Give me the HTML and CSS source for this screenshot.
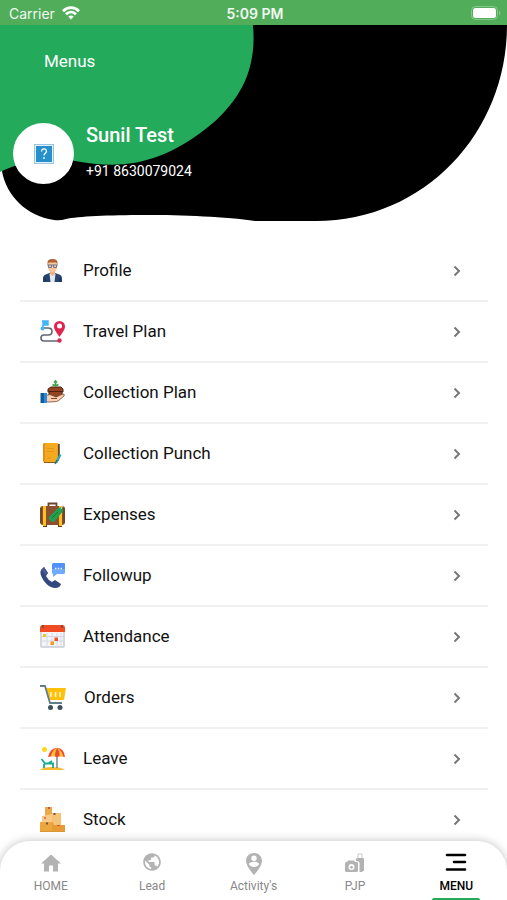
FILE: index.html
```
<!DOCTYPE html>
<html lang="en">
<head>
  <meta charset="UTF-8">
  <title>Menus</title>
  <meta name="viewport" content="width=device-width, initial-scale=1.0">
  <link rel="stylesheet" href="styles.css">
</head>
<body>
  <div class="status-bar">
    <div class="status-left">
      <span>Carrier</span>
      <svg width="18" height="14" viewBox="0 0 18 14" fill="none" stroke="#fff" stroke-width="2.8">
        <path d="M1 5.2C5.5 .5 12.5 .5 17 5.2"/>
        <path d="M4 8.3C7 5.3 11 5.3 14 8.3"/>
        <path d="M6.3 10.6C8 9 10 9 11.7 10.6L9 13.4Z" fill="#fff" stroke="none"/>
      </svg>
    </div>
    <div class="status-time">5:09 PM</div>
    <div class="status-right">
      <svg width="30" height="14" viewBox="0 0 30 14">
        <rect x=".5" y=".5" width="26" height="13" rx="4" fill="none" stroke="#86c78c"/>
        <rect x="2" y="2" width="23" height="10" rx="2.5" fill="#fff"/>
        <path d="M28 4.5Q31 7 28 9.5Z" fill="#86c78c"/>
      </svg>
    </div>
  </div>

  <header class="header">
    <svg class="header-bg" viewBox="0 0 507 196" preserveAspectRatio="none">
      <path d="M0 0H507C507 108 424 196 316 196H255C200 188 90 189 66 194Q60 196 54 195C26 191 6 170 2 146Z" fill="#000"/>
      <path d="M0 0H253C257 45 240 74 213 98C160 142 120 144 75 136C45 131 15 139 0 147Z" fill="#24aa5b"/>
    </svg>
    <h1 class="header-title">Menus</h1>
    <div class="user">
      <div class="avatar">
        <svg width="20" height="20" viewBox="0 0 20 20">
          <rect x=".5" y=".5" width="19" height="19" fill="#e6f2fb" stroke="#9cc3e6"/>
          <rect x="2" y="2" width="16" height="16" fill="#2690cd"/>
          <path d="M7.5 7.5C7.5 4 12.5 4 12.5 7.2C12.5 9.3 10 9.3 10 11.5" fill="none" stroke="#fff" stroke-width="1.3"/>
          <circle cx="10" cy="14" r=".9" fill="#fff"/>
        </svg>
      </div>
      <div class="user-info">
        <p class="user-name">Sunil Test</p>
        <p class="user-phone">+91 8630079024</p>
      </div>
    </div>
  </header>

  <main class="menu-list">
    <a class="menu-item" href="#profile">
      <svg class="menu-icon" viewBox="0 0 25 25">
        <path d="M3 24V20Q3 17 7 16L12 14L18 16Q22 17 22 20V24Z" fill="#27446f"/>
        <path d="M9.5 16L12.5 14L15.5 16L14.5 24H10.5Z" fill="#e4eaf3"/>
        <path d="M10 11H15V16L12.5 18L10 16Z" fill="#eeb184"/>
        <path d="M8 4H17V9Q17 14 12.5 14Q8 14 8 9Z" fill="#fac69b"/>
        <path d="M7.5 6V4Q8 1 12.5 1Q17 1 17.5 4V6L16 4.5H9Z" fill="#ad6238"/>
        <path d="M7 7H18M8.5 7V9.5H11.5V7M13.5 7V9.5H16.5V7" fill="none" stroke="#6b7590"/>
        <path d="M5 20V24M20 20V24" stroke="#162c50"/>
      </svg>
      <span class="menu-label">Profile</span>
      <svg class="chevron" viewBox="0 0 8 12"><path d="M1.5 1.5L6 6L1.5 10.5"/></svg>
    </a>
    <a class="menu-item" href="#travel">
      <svg class="menu-icon" viewBox="0 0 25 25">
        <path d="M3 9H8Q12 9 12 12.500T8 16H4Q1 16 1 19T4 22H19" fill="none" stroke="#626873" stroke-width="1.6"/>
        <path d="M2 2H8V6H3V9" fill="#43b5f5" stroke="#43b5f5" stroke-width="1.5"/>
        <circle cx="2.5" cy="9.5" r="2" fill="#43b5f5"/>
        <path d="M19.5 18C17 14 14 11 14 7.5A5.5 5.5 0 0 1 25 7.5C25 11 22 14 19.5 18Z" fill="#e02450"/>
        <circle cx="19.5" cy="7" r="2.5" fill="#fff"/>
        <circle cx="19.5" cy="21.5" r="2.2" fill="#e02450"/>
      </svg>
      <span class="menu-label">Travel Plan</span>
      <svg class="chevron" viewBox="0 0 8 12"><path d="M1.5 1.5L6 6L1.5 10.5"/></svg>
    </a>
    <a class="menu-item" href="#collection-plan">
      <svg class="menu-icon" viewBox="0 0 25 25">
        <path d="M8 9L11 7H21L23 9V12H22V17H9V12H8Z" fill="#96441f" stroke="#4d2414"/>
        <path d="M9 11.5H22" stroke="#4d2414"/>
        <path d="M15.5 7V2M12.5 4.5L15.5 6L18.5 4.5M14 2.5L15.5 1L17 2.5" fill="none" stroke="#45a247" stroke-width="1.7"/>
        <path d="M6 15.5L10 14.5L16 17L23 14Q25 14 24 16L18 21Q16 22 6 22Z" fill="#ffcfb0" stroke="#6e4936" stroke-width=".8"/>
        <path d="M11 18.5H17" stroke="#6e4936"/>
        <path d="M.5 13H4V23H.5Z" fill="#125c9c"/>
        <path d="M4 13H7V23H4Z" fill="#2a8bdc"/>
      </svg>
      <span class="menu-label">Collection Plan</span>
      <svg class="chevron" viewBox="0 0 8 12"><path d="M1.5 1.5L6 6L1.5 10.5"/></svg>
    </a>
    <a class="menu-item" href="#collection-punch">
      <svg class="menu-icon" viewBox="0 0 25 25">
        <path d="M5 2H17Q19 2 19 4V19L16 22H5Q3 22 3 19V4Q3 2 5 2Z" fill="#f5a91f"/>
        <path d="M3 18V4Q3 2 5 2V21Q3 21 3 18Z" fill="#e98c18"/>
        <path d="M4 21.5H16L18.5 19V3.5" fill="none" stroke="#9a5815" stroke-width="1.2"/>
        <path d="M7 7.5H14M7 10.5H14M7 17H11" stroke="#dc981f"/>
        <path d="M19 3V17" stroke="#4f4536" stroke-width="1.5"/>
        <path d="M20.5 13.5L16 22" stroke="#22a8b8" stroke-width="2.2"/>
        <path d="M17 19L15 23" stroke="#2e6d75" stroke-width="1.2"/>
      </svg>
      <span class="menu-label">Collection Punch</span>
      <svg class="chevron" viewBox="0 0 8 12"><path d="M1.5 1.5L6 6L1.5 10.5"/></svg>
    </a>
    <a class="menu-item" href="#expenses">
      <svg class="menu-icon" viewBox="0 0 25 25">
        <path d="M8.5 5V1.5H16.5V5" fill="none" stroke="#6c432f" stroke-width="1.8"/>
        <path d="M3 22H7V25H3ZM18 22H22V25H18Z" fill="#5d3a2b"/>
        <rect x="0" y="4" width="25" height="19" rx="3" fill="#8a5030"/>
        <path d="M1 6V21M24 6V21" stroke="#74452d" stroke-width="2"/>
        <path d="M3 4H6V24H3ZM19 4H22V24H19Z" fill="#fcc21b"/>
        <path d="M10 14L18 6L22 5L23 9L15 19Q13 21 11 19L9 17Q8 16 10 14Z" fill="#219f50"/>
        <path d="M12 16L18 10" stroke="#137c3b"/>
        <path d="M21 7L23 3" stroke="#dfe5c8"/>
      </svg>
      <span class="menu-label">Expenses</span>
      <svg class="chevron" viewBox="0 0 8 12"><path d="M1.5 1.5L6 6L1.5 10.5"/></svg>
    </a>
    <a class="menu-item" href="#followup">
      <svg class="menu-icon" viewBox="0 0 25 25">
        <path d="M1 7L4 4L8 10L6 13Q8 17 12 19L15 17L21 21Q20 25 15 25Q9 25 4 18Q-1 11 1 7Z" fill="#34477e"/>
        <path d="M1 7L4 4L8 10L6 12Z" fill="#485a94"/>
        <path d="M13 0H24Q25 0 25 2V9Q25 11 24 11H17L13 14V11L12 10V2Z" fill="#6faaff"/>
        <path d="M13 0H24Q25 0 25 2V6H12V2Z" fill="#5292f8"/>
        <path d="M15 5.5H22" stroke="#eef6ff" stroke-width="1.4" stroke-dasharray="1.4 1.4"/>
      </svg>
      <span class="menu-label">Followup</span>
      <svg class="chevron" viewBox="0 0 8 12"><path d="M1.5 1.5L6 6L1.5 10.5"/></svg>
    </a>
    <a class="menu-item" href="#attendance">
      <svg class="menu-icon" viewBox="0 0 25 25">
        <rect x="0" y="2" width="25" height="22" rx="2" fill="#d4d7e0"/>
        <path d="M2 8H23V22H2Z" fill="#f4f5f9"/>
        <path d="M0 8V4Q0 1 3 1H22Q25 1 25 4V8Z" fill="#f14b23"/>
        <path d="M3 1V4M22 1V4" stroke="#8d4936" stroke-width="2"/>
        <path d="M2 12.5H23M2 17H23M7 9V22M12 9V22M17 9V22M21 9V22" stroke="#d6d9e3"/>
        <path d="M3 10H6V13H3Z" fill="#e5ca22"/>
        <path d="M14.5 13.5H18V17H14.5Z" fill="#ee5426"/>
        <path d="M10.5 17.5H14V21H10.5Z" fill="#f39b21"/>
      </svg>
      <span class="menu-label">Attendance</span>
      <svg class="chevron" viewBox="0 0 8 12"><path d="M1.5 1.5L6 6L1.5 10.5"/></svg>
    </a>
    <a class="menu-item" href="#orders">
      <svg class="menu-icon wide" viewBox="0 0 26 25">
        <path d="M6 3H26L24 15H10Z" fill="#ffc107"/>
        <path d="M0 1H5L10 18H22" fill="none" stroke="#607d8b" stroke-width="1.8"/>
        <path d="M11 7V12M15.500 7V12M20 7V12" stroke="#fff3c8" stroke-width="1.6"/>
        <circle cx="10.5" cy="22.5" r="2.5" fill="#3b505b"/>
        <circle cx="20" cy="22.5" r="2.5" fill="#3b505b"/>
      </svg>
      <span class="menu-label">Orders</span>
      <svg class="chevron" viewBox="0 0 8 12"><path d="M1.5 1.5L6 6L1.5 10.5"/></svg>
    </a>
    <a class="menu-item" href="#leave">
      <svg class="menu-icon" viewBox="0 0 25 25">
        <circle cx="4.5" cy="3.5" r="2.5" fill="#fbd81c"/>
        <path d="M0 24Q3 21 12 21T25 24Z" fill="#f9ba32"/>
        <path d="M17 9V22" stroke="#777b88" stroke-width="1.4"/>
        <path d="M8 11Q10 2 17 2T25 11L21 10L17 11L13 10Z" fill="#ef4637"/>
        <path d="M11 10Q12 4 17 2Q15 5 15 10.5ZM17 2Q22 4 23 10.5L19.5 10.5Q20 5 17 2Z" fill="#fec72e"/>
        <path d="M1.5 13L5 17.5H14M4 18V22M13 18V22M9 17L12 15" fill="none" stroke="#15aa91" stroke-width="1.8"/>
      </svg>
      <span class="menu-label">Leave</span>
      <svg class="chevron" viewBox="0 0 8 12"><path d="M1.5 1.5L6 6L1.5 10.5"/></svg>
    </a>
    <a class="menu-item" href="#stock">
      <svg class="menu-icon" viewBox="0 0 25 25">
        <path d="M5 0H12V9H5Z" fill="#e9a94d"/>
        <path d="M12 6H21V18H12Z" fill="#f6c376"/>
        <path d="M2 9L12 7V16H2Z" fill="#fac989"/>
        <path d="M0 15H13V25H0Z" fill="#eda73f"/>
        <path d="M13 18H25V25H13Z" fill="#e79c37"/>
        <path d="M8 0H10V2H8ZM17 18H20V19H17Z" fill="#c9573d"/>
        <path d="M13.5 6H15.5V8H13.5ZM6 15.5H8V17.5H6Z" fill="#6e5448"/>
        <path d="M0 24.5H25M13 16V25" stroke="#dc9835"/>
        <circle cx="5" cy="11" r="1" fill="#d65c48"/>
      </svg>
      <span class="menu-label">Stock</span>
      <svg class="chevron" viewBox="0 0 8 12"><path d="M1.5 1.5L6 6L1.5 10.5"/></svg>
    </a>
  </main>

  <nav class="tab-bar">
    <a class="tab" href="#home">
      <svg viewBox="0 0 24 24"><path d="M10 20.5V14.5H14V20.5H19V12.5H22L12 3.5L2 12.5H5V20.5Z"/></svg>
      <span>HOME</span>
    </a>
    <a class="tab" href="#lead">
      <svg viewBox="0 0 24 24"><g transform="translate(2.4 1.4) scale(.8)"><path d="M12 1C5.9 1 1 5.9 1 12S5.9 23 12 23 23 18.1 23 12 18.1 1 12 1ZM10.9 20.7C6.6 20.2 3.2 16.5 3.2 12C3.2 11.3 3.3 10.7 3.4 10L8.7 15.3V16.4C8.7 17.6 9.7 18.6 10.9 18.6ZM18.5 17.9C18.2 17 17.4 16.4 16.4 16.4H15.3V13.1C15.3 12.5 14.8 12 14.2 12H7.6V9.8H9.8C10.4 9.8 10.9 9.3 10.9 8.7V6.5H13.1C14.3 6.5 15.3 5.5 15.3 4.3V3.8C18.5 5.1 20.8 8.3 20.8 12C20.8 14.3 19.9 16.4 18.5 17.9Z"/></g></svg>
      <span>Lead</span>
    </a>
    <a class="tab" href="#activity">
      <svg viewBox="0 0 24 24"><path d="M12 2C7.6 2 4 5.4 4 9.7C4 15.4 12 24 12 24S20 15.4 20 9.7C20 5.4 16.4 2 12 2ZM12 4.5A2.7 2.7 0 1 1 12 9.9A2.7 2.7 0 1 1 12 4.5ZM12 16C9.8 16 8 14.9 7 13.2C7 11.5 10.3 10.8 12 10.8S17 11.5 17 13.2C16 14.9 14.2 16 12 16Z"/></svg>
      <span>Activity's</span>
    </a>
    <a class="tab" href="#pjp">
      <svg viewBox="0 0 24 24">
        <path d="M4 11L5 9.5H11L12 11H14Q15 11 15 12.5V19.5Q15 21 13.5 21H3.5Q2 21 2 19.5V12.5Q2 11 3.5 11ZM8.5 13A3 3 0 1 0 8.5 19A3 3 0 1 0 8.5 13Z"/>
        <path d="M8.5 14.5L9.3 15.5L10.5 16L8.5 18L6.5 16L7.7 15.5Z"/>
        <path d="M13 8Q13 7 14 7H20Q21 7 21 8V20H19.5V21H16.5V12Q16.5 10 13 10Z"/>
        <path d="M15 7V3H19V7" fill="none" stroke="#c9c9c9"/>
      </svg>
      <span>PJP</span>
    </a>
    <a class="tab active" href="#menu">
      <svg viewBox="0 0 24 24"><path d="M3 4H21M10 11H21M3 18.5H21" fill="none" stroke="#000" stroke-width="2.6" stroke-linecap="round"/></svg>
      <span>MENU</span>
    </a>
  </nav>
</body>
</html>
```
FILE: styles.css
```
* {
  box-sizing: border-box;
}
body {
  font-family: Roboto, sans-serif;
  background-color: #fff;
  color: #111;
  margin: 0;
  display: flex;
  flex-direction: column;
  height: 100vh;
  overflow: hidden;
}
h1, p {
  margin: 0;
  font-weight: 400;
}
a {
  color: inherit;
  text-decoration: none;
}
.status-bar {
  display: grid;
  grid-template-columns: 1fr auto 1fr;
  align-items: center;
  flex: none;
  height: 25px;
  padding: 1px 6px 0 9px;
  background-color: #52ad5b;
  color: #f0f8f0;
  font-family: Inter, sans-serif;
  font-size: 14px;
}
.status-left {
  display: flex;
  align-items: center;
  gap: 7px;
}
.status-time {
  font-weight: 600;
}
.status-right {
  display: flex;
  justify-content: flex-end;
}
.header {
  position: relative;
  flex: none;
  height: 196px;
  padding: 24px 13px 0;
  color: #fff;
}
.header-bg {
  position: absolute;
  top: 0;
  left: 0;
  width: 100%;
  height: 100%;
}
.header-title {
  position: relative;
  padding-left: 31px;
  font-size: 17px;
  line-height: 24px;
}
.user {
  position: relative;
  display: flex;
  gap: 12px;
  margin-top: 50px;
}
.avatar {
  display: flex;
  align-items: center;
  justify-content: center;
  width: 61px;
  height: 61px;
  border-radius: 50%;
  background-color: #fff;
}
.user-name {
  font-size: 20px;
  font-weight: 500;
  line-height: 24px;
}
.user-phone {
  margin-top: 14px;
  font-size: 14px;
  line-height: 20px;
}
.menu-list {
  flex: 1;
  min-height: 0;
  padding: 20px 19px 0 20px;
  overflow-y: auto;
  scrollbar-width: none;
}
.menu-item {
  display: flex;
  align-items: center;
  height: 61px;
  padding: 0 27px 0 20px;
  border-bottom: 2px solid #f0f0f0;
}
.menu-icon {
  width: 25px;
  height: 25px;
  margin-right: 18px;
}
.menu-icon.wide {
  width: 26px;
}
.menu-label {
  flex: 1;
  padding-bottom: 2px;
  font-size: 17px;
}
.chevron {
  width: 8px;
  height: 12px;
  fill: none;
  stroke: #777;
  stroke-width: 2;
}
.tab-bar {
  position: relative;
  display: flex;
  flex: none;
  height: 59px;
  border-radius: 30px 30px 0 0;
  background-color: #fff;
  box-shadow: 0 0 10px rgba(0, 0, 0, 0.25);
}
.tab {
  position: relative;
  flex: 1;
  display: flex;
  flex-direction: column;
  align-items: center;
  padding-top: 10px;
  color: #888;
  font-size: 12px;
  line-height: 16px;
}
.tab svg {
  width: 24px;
  height: 24px;
  margin-bottom: 3px;
  fill: #b3b3b3;
  fill-rule: evenodd;
}
.tab.active {
  color: #000;
  font-weight: 500;
}
.tab.active::after {
  content: "";
  position: absolute;
  bottom: 0;
  width: 48px;
  height: 2px;
  border-radius: 2px 2px 0 0;
  background-color: #24aa5b;
}
```
